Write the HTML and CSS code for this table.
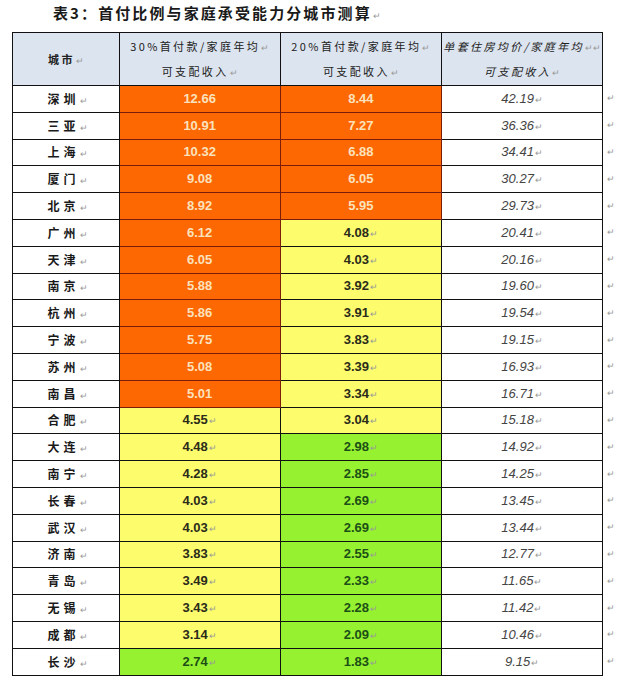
FILE: index.html
```html
<!DOCTYPE html>
<html lang="zh">
<head>
<meta charset="utf-8">
<link rel="stylesheet" href="styles.css">
</head>
<body>
<div class="page">
  <h1 class="title">表3：首付比例与家庭承受能力分城市测算<span class="rm">↵</span></h1>
  <table class="grid">
    <thead>
      <tr>
        <th class="c-city">城市<span class="rm">↵</span></th>
        <th class="c-a">30%首付款/家庭年均<span class="rm">↵</span><br>可支配收入<span class="rm">↵</span></th>
        <th class="c-b">20%首付款/家庭年均<span class="rm">↵</span><br>可支配收入<span class="rm">↵</span></th>
        <th class="c-c it">单套住房均价/家庭年均<span class="rm">↵↵</span><br>可支配收入<span class="rm">↵</span></th>
        <th class="out"></th>
      </tr>
    </thead>
    <tbody>
      <tr><td class="city">深圳<span class="rm">↵</span></td><td class="o">12.66</td><td class="o">8.44</td><td class="w">42.19<span class="rm">↵</span></td><td class="out">↵</td></tr>
      <tr><td class="city">三亚<span class="rm">↵</span></td><td class="o">10.91</td><td class="o">7.27</td><td class="w">36.36<span class="rm">↵</span></td><td class="out">↵</td></tr>
      <tr><td class="city">上海<span class="rm">↵</span></td><td class="o">10.32</td><td class="o">6.88</td><td class="w">34.41<span class="rm">↵</span></td><td class="out">↵</td></tr>
      <tr><td class="city">厦门<span class="rm">↵</span></td><td class="o">9.08</td><td class="o">6.05</td><td class="w">30.27<span class="rm">↵</span></td><td class="out">↵</td></tr>
      <tr><td class="city">北京<span class="rm">↵</span></td><td class="o">8.92</td><td class="o">5.95</td><td class="w">29.73<span class="rm">↵</span></td><td class="out">↵</td></tr>
      <tr><td class="city">广州<span class="rm">↵</span></td><td class="o">6.12</td><td class="y">4.08<span class="rm">↵</span></td><td class="w">20.41<span class="rm">↵</span></td><td class="out">↵</td></tr>
      <tr><td class="city">天津<span class="rm">↵</span></td><td class="o">6.05</td><td class="y">4.03<span class="rm">↵</span></td><td class="w">20.16<span class="rm">↵</span></td><td class="out">↵</td></tr>
      <tr><td class="city">南京<span class="rm">↵</span></td><td class="o">5.88</td><td class="y">3.92<span class="rm">↵</span></td><td class="w">19.60<span class="rm">↵</span></td><td class="out">↵</td></tr>
      <tr><td class="city">杭州<span class="rm">↵</span></td><td class="o">5.86</td><td class="y">3.91<span class="rm">↵</span></td><td class="w">19.54<span class="rm">↵</span></td><td class="out">↵</td></tr>
      <tr><td class="city">宁波<span class="rm">↵</span></td><td class="o">5.75</td><td class="y">3.83<span class="rm">↵</span></td><td class="w">19.15<span class="rm">↵</span></td><td class="out">↵</td></tr>
      <tr><td class="city">苏州<span class="rm">↵</span></td><td class="o">5.08</td><td class="y">3.39<span class="rm">↵</span></td><td class="w">16.93<span class="rm">↵</span></td><td class="out">↵</td></tr>
      <tr><td class="city">南昌<span class="rm">↵</span></td><td class="o">5.01</td><td class="y">3.34<span class="rm">↵</span></td><td class="w">16.71<span class="rm">↵</span></td><td class="out">↵</td></tr>
      <tr><td class="city">合肥<span class="rm">↵</span></td><td class="y">4.55<span class="rm">↵</span></td><td class="y">3.04<span class="rm">↵</span></td><td class="w">15.18<span class="rm">↵</span></td><td class="out">↵</td></tr>
      <tr><td class="city">大连<span class="rm">↵</span></td><td class="y">4.48<span class="rm">↵</span></td><td class="g">2.98<span class="rm">↵</span></td><td class="w">14.92<span class="rm">↵</span></td><td class="out">↵</td></tr>
      <tr><td class="city">南宁<span class="rm">↵</span></td><td class="y">4.28<span class="rm">↵</span></td><td class="g">2.85<span class="rm">↵</span></td><td class="w">14.25<span class="rm">↵</span></td><td class="out">↵</td></tr>
      <tr><td class="city">长春<span class="rm">↵</span></td><td class="y">4.03<span class="rm">↵</span></td><td class="g">2.69<span class="rm">↵</span></td><td class="w">13.45<span class="rm">↵</span></td><td class="out">↵</td></tr>
      <tr><td class="city">武汉<span class="rm">↵</span></td><td class="y">4.03<span class="rm">↵</span></td><td class="g">2.69<span class="rm">↵</span></td><td class="w">13.44<span class="rm">↵</span></td><td class="out">↵</td></tr>
      <tr><td class="city">济南<span class="rm">↵</span></td><td class="y">3.83<span class="rm">↵</span></td><td class="g">2.55<span class="rm">↵</span></td><td class="w">12.77<span class="rm">↵</span></td><td class="out">↵</td></tr>
      <tr><td class="city">青岛<span class="rm">↵</span></td><td class="y">3.49<span class="rm">↵</span></td><td class="g">2.33<span class="rm">↵</span></td><td class="w">11.65<span class="rm">↵</span></td><td class="out">↵</td></tr>
      <tr><td class="city">无锡<span class="rm">↵</span></td><td class="y">3.43<span class="rm">↵</span></td><td class="g">2.28<span class="rm">↵</span></td><td class="w">11.42<span class="rm">↵</span></td><td class="out">↵</td></tr>
      <tr><td class="city">成都<span class="rm">↵</span></td><td class="y">3.14<span class="rm">↵</span></td><td class="g">2.09<span class="rm">↵</span></td><td class="w">10.46<span class="rm">↵</span></td><td class="out">↵</td></tr>
      <tr><td class="city">长沙<span class="rm">↵</span></td><td class="g">2.74<span class="rm">↵</span></td><td class="g">1.83<span class="rm">↵</span></td><td class="w">9.15<span class="rm">↵</span></td><td class="out">↵</td></tr>
    </tbody>
  </table>
</div>
</body>
</html>
```

FILE: styles.css
```css
html, body {
  margin: 0;
  padding: 0;
  background: #ffffff;
}

.page {
  padding: 0 0 0 12px;
  font-family: "Liberation Sans", "Noto Sans CJK SC", sans-serif;
  color: #222;
}

.title {
  margin: 0;
  height: 32px;
  box-sizing: border-box;
  padding: 3px 0 0 41px;
  font-family: "Noto Sans CJK SC", sans-serif;
  font-size: 15px;
  font-weight: 700;
  letter-spacing: 2.1px;
  line-height: 20px;
  color: #1a1a1a;
}

.grid {
  border-collapse: collapse;
  table-layout: fixed;
}

.grid th,
.grid td {
  border: 1px solid #111;
  padding: 0;
  text-align: center;
  vertical-align: middle;
}

.grid th {
  background: #dce4ef;
  font-family: "Noto Sans CJK SC", sans-serif;
  font-weight: 400;
  font-size: 11px;
  letter-spacing: 2.4px;
  line-height: 25px;
  height: 52px;
  color: #222;
}

.grid th.c-city { width: 106px; font-weight: 700; }
.grid th.c-a { width: 160px; }
.grid th.c-b { width: 161px; }
.grid th.c-c { width: 160px; }
.grid th.it { font-style: italic; }

.grid th.out,
.grid td.out {
  border: none;
  background: transparent;
  width: 10px;
  font-size: 9px;
  line-height: 1;
  color: #999;
  text-align: left;
  padding-left: 4px;
  font-style: normal;
  font-weight: 400;
}

.grid td {
  height: 25.8px;
  font-size: 13px;
  line-height: 16px;
  font-weight: 700;
}

.grid td.city {
  font-family: "Noto Sans CJK SC", sans-serif;
  font-size: 12px;
  letter-spacing: 4px;
  color: #1a1a1a;
  padding-left: 4px;
}

.grid td.o {
  background: #fd6803;
  color: #fbe2bd;
  border-color: #7a1d0a;
}

.grid td.y {
  background: #fcfc6c;
  color: #2b2b1a;
}

.grid td.g {
  background: #96f230;
  color: #1c4f16;
}

.grid td.w {
  background: #ffffff;
  color: #444;
  font-style: italic;
  font-weight: 400;
}

.rm {
  font-size: 9px;
  line-height: 1;
  font-weight: 400;
  font-style: normal;
  color: #999;
  letter-spacing: 0;
  margin-left: 1px;
}
```
